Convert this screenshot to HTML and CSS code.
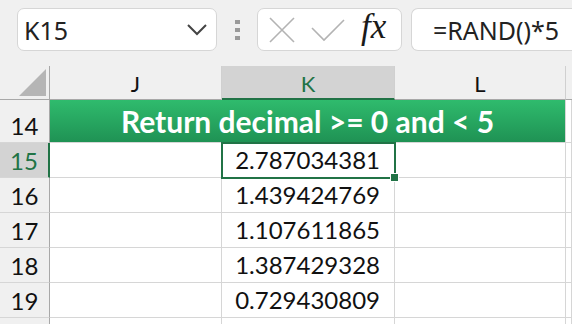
FILE: index.html
```html
<!DOCTYPE html>
<html lang="en">
<head>
  <meta charset="UTF-8">
  <title>RAND</title>
  <link rel="stylesheet" href="styles.css">
</head>
<body>

  <div class="toolbar">
    <div class="name-box">
      <span>K15</span>
      <svg width="20" height="12" viewBox="0 0 20 12"><path d="M1 1 L10 10 L19 1" fill="none" stroke="#444" stroke-width="2"/></svg>
    </div>
    <div class="dots"><i></i><i></i><i></i></div>
    <div class="fx-buttons">
      <svg width="26" height="26" viewBox="0 0 26 26"><path d="M1 1 L25 25 M25 1 L1 25" stroke="#b3b3b3" stroke-width="1.6"/></svg>
      <svg width="34" height="24" viewBox="0 0 34 24"><path d="M1 10 L13 22 L33 2" fill="none" stroke="#b3b3b3" stroke-width="1.6"/></svg>
      <span class="fx">fx</span>
    </div>
    <div class="formula">=RAND()*5</div>
  </div>

  <div class="sheet">
    <div class="corner"><div class="triangle"></div></div>
    <div class="col-head">J</div>
    <div class="col-head active">K</div>
    <div class="col-head">L</div>
    <div class="col-head last"></div>

    <div class="row-head">14</div>
    <div class="banner">Return decimal &gt;= 0 and &lt; 5</div>
    <div class="cell"></div>

    <div class="row-head active">15</div>
    <div class="cell"></div>
    <div class="cell num selected">2.787034381<span class="handle"></span></div>
    <div class="cell"></div>
    <div class="cell"></div>

    <div class="row-head">16</div>
    <div class="cell"></div>
    <div class="cell num">1.439424769</div>
    <div class="cell"></div>
    <div class="cell"></div>

    <div class="row-head">17</div>
    <div class="cell"></div>
    <div class="cell num">1.107611865</div>
    <div class="cell"></div>
    <div class="cell"></div>

    <div class="row-head">18</div>
    <div class="cell"></div>
    <div class="cell num">1.387429328</div>
    <div class="cell"></div>
    <div class="cell"></div>

    <div class="row-head">19</div>
    <div class="cell"></div>
    <div class="cell num">0.729430809</div>
    <div class="cell"></div>
    <div class="cell"></div>

    <div class="row-head"></div>
    <div class="cell"></div>
    <div class="cell"></div>
    <div class="cell"></div>
    <div class="cell"></div>
  </div>

</body>
</html>
```

FILE: styles.css
```css
body {
  margin: 0;
  background: #f0f0f0;
  font-family: Lato, "Liberation Sans", sans-serif;
  width: 572px;
  height: 324px;
  overflow: hidden;
}

.toolbar {
  display: flex;
  align-items: center;
  height: 66px;
  padding-left: 17px;
  padding-bottom: 7px;
  box-sizing: border-box;
}

.name-box, .fx-buttons, .formula {
  height: 43px;
  box-sizing: border-box;
  background: #fff;
  border: 1px solid #d6d6d6;
  border-radius: 7px;
  display: flex;
  align-items: center;
}

.name-box {
  width: 200px;
  padding: 0 9px 0 6px;
  justify-content: space-between;
  font-family: "Noto Sans", sans-serif;
  font-size: 25px;
  color: #222;
}

.dots {
  display: flex;
  flex-direction: column;
  gap: 4px;
  margin: 0 17px 0 18px;
}

.dots i {
  width: 5px;
  height: 4px;
  background: #9a9a9a;
}

.fx-buttons {
  width: 145px;
  padding: 0 10px 0 11px;
  gap: 16px;
}

.fx {
  font-family: "Liberation Serif", serif;
  font-style: italic;
  font-size: 35px;
  color: #1a1a1a;
  margin-top: -6px;
}

.formula {
  flex: 1;
  margin-left: 9px;
  padding-left: 21px;
  border-right: none;
  border-radius: 7px 0 0 7px;
  font-family: "Noto Sans", sans-serif;
  font-size: 25px;
  color: #222;
}

.sheet {
  display: grid;
  grid-template-columns: 50px 172px 173px 171px 1fr;
  grid-template-rows: 34px 43px repeat(6, 35px);
  background: #fff;
  font-size: 24px;
  color: #111;
}

.corner {
  background: #f0f0f0;
  border-right: 1px solid #a8a8a8;
  border-bottom: 1px solid #a8a8a8;
  position: relative;
}

.triangle {
  position: absolute;
  right: 3px;
  bottom: 3px;
  width: 27px;
  height: 27px;
  background: #b5b5b5;
  clip-path: polygon(100% 0, 100% 100%, 0 100%);
}

.col-head {
  background: #f0f0f0;
  border-right: 1px solid #d0d0d0;
  border-bottom: 1px solid #a8a8a8;
  display: flex;
  align-items: flex-end;
  justify-content: center;
  padding-bottom: 2px;
  font-size: 22px;
}

.col-head.active {
  background: #d3d3d3;
  color: #217346;
  border-bottom: 2px solid #217346;
  padding-bottom: 1px;
}

.col-head.last {
  border-right: none;
}

.row-head {
  background: #f0f0f0;
  border-right: 1px solid #a8a8a8;
  border-bottom: 1px solid #d6d6d6;
  display: flex;
  align-items: flex-end;
  justify-content: center;
  padding-bottom: 2px;
}

.row-head.active {
  background: #d3d3d3;
  color: #217346;
  border-right: 2px solid #217346;
}

.banner {
  grid-column: 2 / 5;
  background: linear-gradient(#2fbb6d, #1f9254);
  color: #fff;
  font-weight: bold;
  font-size: 30px;
  display: flex;
  align-items: center;
  justify-content: center;
  border-right: 1px solid #d6d6d6;
  border-bottom: 1px solid #d6d6d6;
}

.cell {
  border-right: 1px solid #d6d6d6;
  border-bottom: 1px solid #d6d6d6;
}

.num {
  display: flex;
  align-items: flex-end;
  justify-content: flex-end;
  padding: 0 14px 3px 0;
}

.selected {
  position: relative;
  outline: 2px solid #217346;
  outline-offset: -1px;
}

.handle {
  position: absolute;
  right: -5px;
  bottom: -5px;
  width: 7px;
  height: 7px;
  background: #217346;
  border: 1px solid #fff;
}
```
